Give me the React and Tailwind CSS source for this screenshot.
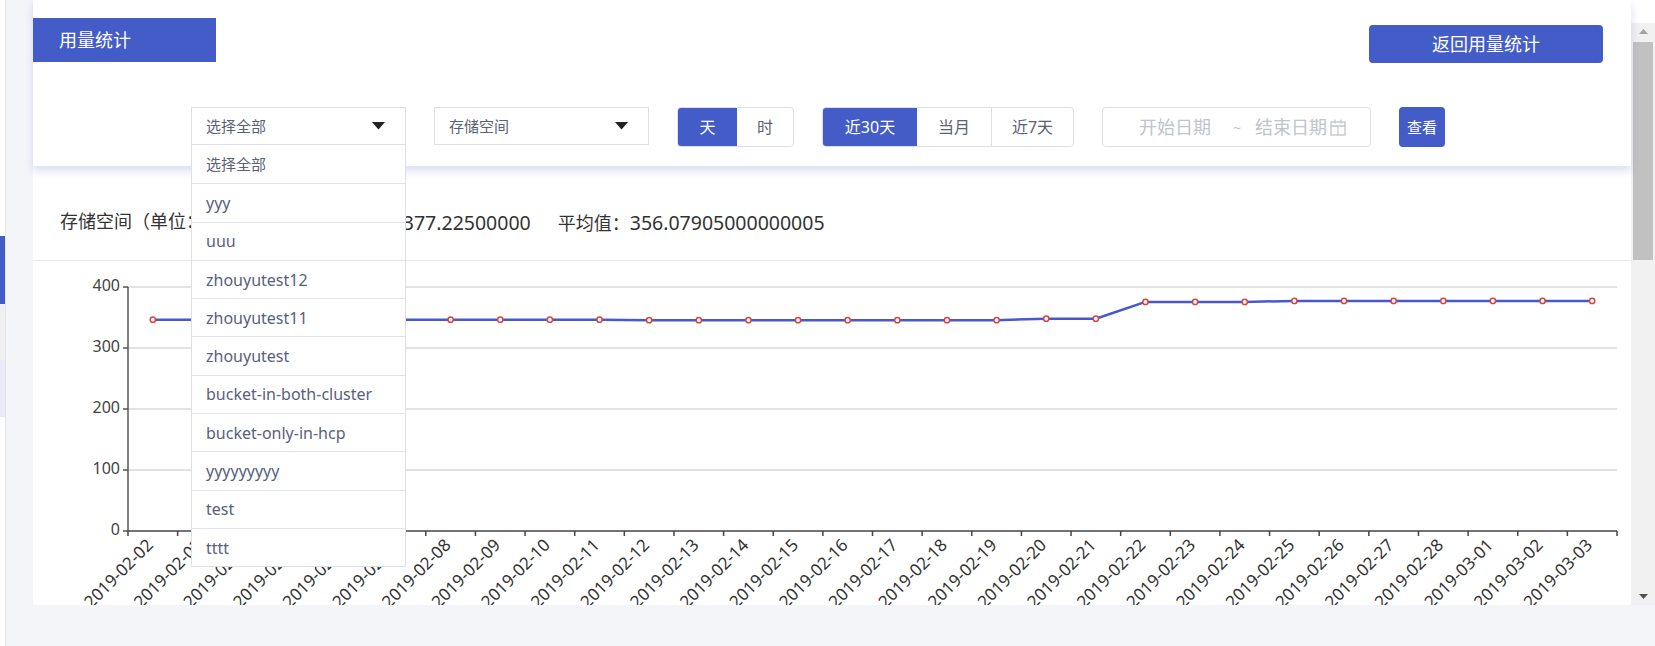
import React from "react";

const buckets = [
  "选择全部",
  "yyy",
  "uuu",
  "zhouyutest12",
  "zhouyutest11",
  "zhouyutest",
  "bucket-in-both-cluster",
  "bucket-only-in-hcp",
  "yyyyyyyyy",
  "test",
  "tttt",
];

// 2019-02-02 .. 2019-03-03
const dates = [];
for (let d = 2; d <= 28; d++) dates.push(`2019-02-${String(d).padStart(2, "0")}`);
for (let d = 1; d <= 3; d++) dates.push(`2019-03-0${d}`);

const values = [
  346.5, 346.5, 346.5, 346.5, 346.5, 346.5, 346.5, 346.5, 346.5, 346.5,
  345.6, 345.6, 345.6, 345.6, 345.6, 345.6, 345.6, 345.6,
  348, 348,
  375.6, 375.6, 375.6,
  377.2, 377.2, 377.2, 377.2, 377.2, 377.2, 377.2,
];

const Caret = () => (
  <svg width="13" height="8" viewBox="0 0 13 8">
    <path d="M0 0 L13 0 L6.5 7.5 Z" fill="#222" />
  </svg>
);

const Chart = () => {
  const X0 = 95;
  const X1 = 1584;
  const Y0 = 270;
  const YT = 26;
  const step = (X1 - X0) / dates.length;
  const y = (v) => Y0 - (v * (Y0 - YT)) / 400;
  const cx = (i) => X0 + step * (i + 0.5);
  const font = "Noto Sans, Noto Sans CJK SC, sans-serif";

  return (
    <svg width="1598" height="344" className="block">
      {/* grid */}
      {[400, 300, 200, 100].map((v) => (
        <line key={v} x1={X0} x2={X1} y1={y(v)} y2={y(v)} stroke="#d9d9d9" strokeWidth="1.5" />
      ))}
      {/* y axis */}
      <line x1={X0} x2={X0} y1={YT} y2={Y0} stroke="#555" strokeWidth="1.5" />
      {[0, 100, 200, 300, 400].map((v) => (
        <g key={v}>
          <line x1={X0 - 5} x2={X0} y1={y(v)} y2={y(v)} stroke="#555" strokeWidth="1.5" />
          <text x={X0 - 8} y={y(v)} textAnchor="end" dominantBaseline="middle" fontSize="16" fill="#444" fontFamily={font}>
            {v}
          </text>
        </g>
      ))}
      {/* x axis */}
      <line x1={X0} x2={X1} y1={Y0} y2={Y0} stroke="#444" strokeWidth="1.5" />
      {dates.map((d, i) => (
        <line key={"t" + d} x1={X0 + step * i} x2={X0 + step * i} y1={Y0} y2={Y0 + 5} stroke="#444" strokeWidth="1.5" />
      ))}
      <line x1={X1} x2={X1} y1={Y0} y2={Y0 + 5} stroke="#444" strokeWidth="1.5" />
      {dates.map((d, i) => (
        <text
          key={"l" + d}
          x={cx(i) - 2}
          y={Y0 + 12}
          textAnchor="end"
          dominantBaseline="middle"
          fontSize="17"
          fill="#333"
          fontFamily={font}
          transform={`rotate(-45 ${cx(i) - 2} ${Y0 + 12})`}
        >
          {d}
        </text>
      ))}
      {/* series */}
      <polyline
        points={values.map((v, i) => `${cx(i)},${y(v)}`).join(" ")}
        fill="none"
        stroke="#4759cc"
        strokeWidth="2.5"
        strokeLinejoin="round"
      />
      {values.map((v, i) => (
        <circle key={"p" + i} cx={cx(i)} cy={y(v)} r="2.6" fill="#fff" stroke="#d9453d" strokeWidth="1.5" />
      ))}
    </svg>
  );
};

export default function App() {
  return (
    <div className="flex h-[646px] w-full overflow-hidden bg-[#f4f5f9] font-['Noto_Sans','Noto_Sans_CJK_SC',sans-serif]">
      {/* collapsed side menu edge */}
      <div className="flex w-[6px] shrink-0 flex-col border-r border-[#e4e4e4] bg-white">
        <div className="h-[236px]" />
        <div className="h-[68px] bg-[#445cc8]" />
        <div className="h-[56px] bg-[#f0f0f0]" />
        <div className="h-[57px] bg-[#e8ebf7]" />
      </div>

      <div className="flex flex-1 pl-[27px]">
        <div className="flex w-[1598px] flex-col">
          {/* header card */}
          <div className="relative z-20 h-[166px] bg-white shadow-[0_5px_8px_rgba(90,110,180,0.22)]">
            <div className="flex items-start justify-between">
              <div className="mt-[18px] flex h-[44px] w-[183px] items-center bg-[#445cc8] pl-[26px] text-[18px] text-white">
                用量统计
              </div>
              <button className="mr-[28px] mt-[25px] h-[38px] w-[234px] rounded-[4px] bg-[#445cc8] text-[18px] text-white">
                返回用量统计
              </button>
            </div>

            <div className="mt-[44px] flex items-start gap-[28px] pl-[158px]">
              <div className="relative">
                <div className="flex h-[38px] w-[215px] items-center justify-between border border-[#dcdfe6] pl-[14px] pr-[20px] text-[15px] text-[#5b6275]">
                  <span>选择全部</span>
                  <Caret />
                </div>
                <div className="absolute left-0 top-[37px] w-[215px] border border-[#dcdfe6] bg-white">
                  {buckets.map((b, i) => (
                    <div
                      key={b}
                      className={`flex h-[38.3px] items-center pl-[14px] ${i === 0 ? "text-[15px] text-[#5b6275]" : "border-t border-[#e1e5ef] text-[16px] text-[#58617d]"}`}
                    >
                      {b}
                    </div>
                  ))}
                </div>
              </div>

              <div className="flex h-[38px] w-[215px] items-center justify-between border border-[#dcdfe6] pl-[14px] pr-[20px] text-[15px] text-[#5b6275]">
                <span>存储空间</span>
                <Caret />
              </div>

              <div className="flex h-[40px] overflow-hidden rounded-[4px] border border-[#dcdfe6] text-[16px]">
                <div className="flex w-[59px] items-center justify-center bg-[#445cc8] text-white">天</div>
                <div className="flex w-[56px] items-center justify-center text-[#5b6275]">时</div>
              </div>

              <div className="flex h-[40px] overflow-hidden rounded-[4px] border border-[#dcdfe6] text-[16px]">
                <div className="flex w-[94px] items-center justify-center bg-[#445cc8] text-white">近30天</div>
                <div className="flex w-[74px] items-center justify-center text-[#5b6275]">当月</div>
                <div className="flex w-[82px] items-center justify-center border-l border-[#dcdfe6] text-[#5b6275]">近7天</div>
              </div>

              <div className="flex h-[40px] w-[269px] items-center overflow-hidden rounded-[4px] border border-[#dcdfe6] pl-[36px] text-[18px] text-[#c0c4cc]">
                <span className="shrink-0">开始日期</span>
                <span className="ml-[22px] shrink-0 text-[14px]">~</span>
                <span className="ml-[14px] shrink-0">结束日期</span>
                <svg width="16" height="17" viewBox="0 0 16 17" className="ml-[3px] shrink-0">
                  <rect x="1" y="3" width="14" height="13" fill="none" stroke="#c0c4cc" strokeWidth="1.3" />
                  <line x1="1" x2="15" y1="7" y2="7" stroke="#c0c4cc" strokeWidth="1.3" />
                  <line x1="5" x2="5" y1="0.5" y2="4.5" stroke="#c0c4cc" strokeWidth="1.3" />
                  <line x1="11" x2="11" y1="0.5" y2="4.5" stroke="#c0c4cc" strokeWidth="1.3" />
                  <line x1="8" x2="8" y1="7" y2="16" stroke="#c0c4cc" strokeWidth="1.1" />
                </svg>
              </div>

              <button className="h-[40px] w-[46px] rounded-[4px] bg-[#445cc8] text-[15px] text-white">查看</button>
            </div>
          </div>

          {/* chart card */}
          <div className="relative z-10 h-[439px] overflow-hidden bg-white">
            <div className="flex h-[95px] items-start border-b border-[#e8e8e8] pl-[27px] pt-[42px] text-[18px] text-[#333]">
              <span>存储空间（单位：GB）</span>
              <span className="ml-[84px]">
                最大值：<span className="text-[19.5px]">377.22500000</span>
              </span>
              <span className="ml-[27px]">
                平均值：<span className="text-[19.5px]">356.07905000000005</span>
              </span>
            </div>
            <Chart />
          </div>
        </div>

        {/* scrollbar */}
        <div className="flex w-[24px] flex-col">
          <div className="h-[23px] bg-white" />
          <div className="flex h-[582px] flex-col items-center bg-[#f1f1f1]">
            <div className="flex h-[17px] w-full items-center justify-center">
              <svg width="9" height="5" viewBox="0 0 9 5"><path d="M0 5 L4.5 0 L9 5 Z" fill="#a3a3a3" /></svg>
            </div>
            <div className="mt-[2px] h-[218px] w-[20px] bg-[#c1c1c1]" />
            <div className="flex-1" />
            <div className="flex h-[17px] w-full items-center justify-center">
              <svg width="9" height="5" viewBox="0 0 9 5"><path d="M0 0 L9 0 L4.5 5 Z" fill="#505050" /></svg>
            </div>
          </div>
        </div>
      </div>
    </div>
  );
}
